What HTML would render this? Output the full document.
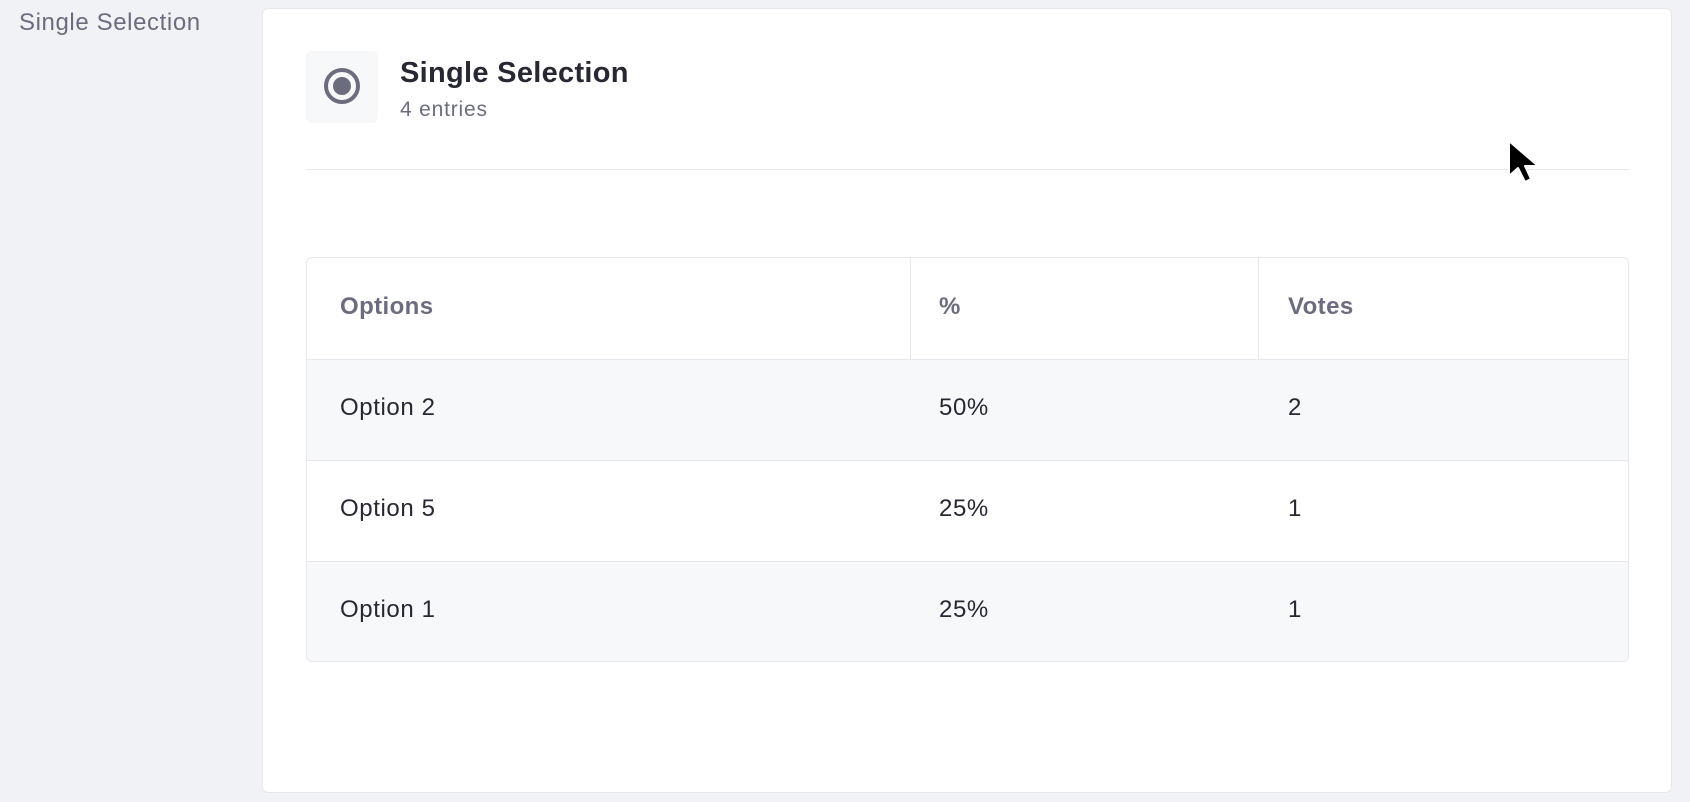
<!DOCTYPE html>
<html><head><meta charset="utf-8"><style>
*{box-sizing:border-box;margin:0;padding:0}
html,body{width:1690px;height:802px;overflow:hidden;background:#f1f2f5;font-family:"Liberation Sans",sans-serif}
.lbl{position:absolute;left:19px;top:9px;font-size:24px;letter-spacing:0.6px;color:#6b6c7e}
.card{position:absolute;left:262px;top:8px;width:1410px;height:785px;background:#fff;border:1px solid #e7e7ed;border-radius:6px}
.ib{position:absolute;left:306px;top:51px;width:72px;height:72px;background:#f7f8f9;border-radius:6px}
.t{position:absolute;left:400px;top:57px;font-size:29px;font-weight:bold;letter-spacing:0.3px;color:#272833}
.e{position:absolute;left:400px;top:98px;font-size:21px;letter-spacing:0.8px;color:#6b6c7e}
.hr{position:absolute;left:306px;top:169px;width:1323px;height:1px;background:#e7e7ed}
.tbl{position:absolute;left:306px;top:257px;width:1323px;height:405px;border:1px solid #e7e7ed;border-radius:6px;overflow:hidden}
.r{position:absolute;left:0;width:100%;border-top:1px solid #e7e7ed}
.c{position:absolute;font-size:24px;letter-spacing:0.6px;color:#272833}
.h{font-weight:bold;color:#6b6c7e;letter-spacing:0.4px}
.v{position:absolute;top:0;width:1px;height:101px;background:#e7e7ed}
</style></head><body>
<div class="lbl">Single Selection</div>
<div class="card"></div>
<div class="ib"><svg width="72" height="72"><circle cx="36" cy="35" r="16" fill="none" stroke="#6b6c7e" stroke-width="4"/><circle cx="36" cy="35" r="9" fill="#6b6c7e"/></svg></div>
<div class="t">Single Selection</div>
<div class="e">4 entries</div>
<div class="hr"></div>
<div class="tbl">
<div class="v" style="left:603px"></div><div class="v" style="left:951px"></div>
<div class="r" style="top:101px;height:101px;background:#f7f8f9"></div>
<div class="r" style="top:202px;height:101px;background:#fff"></div>
<div class="r" style="top:303px;height:102px;background:#f7f8f9"></div>
<div class="c h" style="left:33px;top:35px">Options</div>
<div class="c h" style="left:632px;top:35px">%</div>
<div class="c h" style="left:981px;top:35px">Votes</div>
<div class="c" style="left:33px;top:136px">Option 2</div><div class="c" style="left:632px;top:136px">50%</div><div class="c" style="left:981px;top:136px">2</div>
<div class="c" style="left:33px;top:237px">Option 5</div><div class="c" style="left:632px;top:237px">25%</div><div class="c" style="left:981px;top:237px">1</div>
<div class="c" style="left:33px;top:338px">Option 1</div><div class="c" style="left:632px;top:338px">25%</div><div class="c" style="left:981px;top:338px">1</div>
</div>
<svg style="position:absolute;left:1506px;top:138px" width="40" height="52"><path d="M3 3 L3 38 L12 30 L19 44 L25 41 L19 28 L32 28 Z" fill="#000" stroke="#fff" stroke-width="2" stroke-linejoin="round"/></svg>
</body></html>
